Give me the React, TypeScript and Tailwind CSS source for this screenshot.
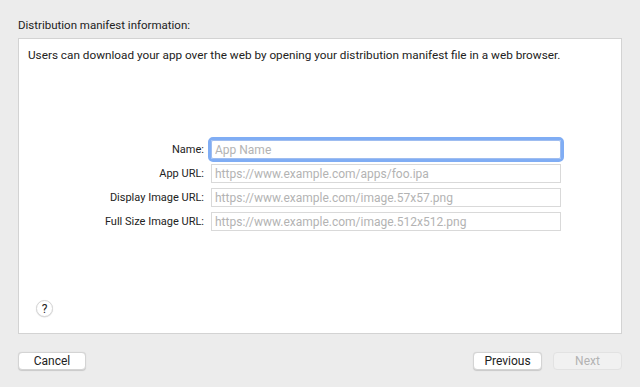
const fields = [
    { label: "Name:", placeholder: "App Name", focused: true },
    { label: "App URL:", placeholder: "https://www.example.com/apps/foo.ipa" },
    { label: "Display Image URL:", placeholder: "https://www.example.com/image.57x57.png" },
    { label: "Full Size Image URL:", placeholder: "https://www.example.com/image.512x512.png" },
];

export default function App() {
    return (
        <div className="w-[640px] h-[387px] bg-[#ececec] text-[#222222] font-['Roboto','Liberation_Sans',sans-serif] flex flex-col px-[18px] pt-[18px]">
            <h1 className="text-[11.5px] leading-[14px] h-[20px]">Distribution manifest information:</h1>
            <div className="h-[296px] bg-white border border-[#d3d3d3] flex flex-col px-[9px] pt-[9px]">
                <p className="text-[11.75px] leading-[15px] whitespace-nowrap">
                    Users can download your app over the web by opening your distribution manifest file in a web browser.
                </p>
                <div className="mt-[77px] flex flex-col gap-[5px]">
                    {fields.map((f) => (
                        <div key={f.label} className="flex items-center h-[19px]">
                            <label className="w-[183px] text-right pr-[7px] text-[11px] leading-[14px] whitespace-nowrap">
                                {f.label}
                            </label>
                            <input
                                readOnly
                                placeholder={f.placeholder}
                                className={
                                    f.focused
                                        ? "w-[350px] h-[19px] px-[3px] border border-[#9fbdf0] outline outline-[3px] outline-[#80adf4] rounded-[2px] placeholder:text-[#b3b3b3] text-[12px]"
                                        : "w-[350px] h-[19px] px-[3px] border border-[#d9d9d9] outline-none placeholder:text-[#b3b3b3] text-[12px]"
                                }
                            />
                        </div>
                    ))}
                </div>
                <div className="flex-1" />
                <button className="ml-[8px] mb-[16px] w-[17px] h-[17px] rounded-full border border-[#d6d6d6] bg-white shadow-[0_0.5px_1px_rgba(0,0,0,0.15)] flex items-center justify-center text-[12px] leading-none">
                    ?
                </button>
            </div>
            <div className="flex items-center mt-[18px] text-[12px]">
                <button className="w-[68px] h-[18px] bg-white rounded-[4px] border border-[#d4d4d4] shadow-[0_0.5px_1px_rgba(0,0,0,0.15)] leading-none">
                    Cancel
                </button>
                <div className="flex-1" />
                <button className="w-[69px] h-[18px] bg-white rounded-[4px] border border-[#d4d4d4] shadow-[0_0.5px_1px_rgba(0,0,0,0.15)] leading-none">
                    Previous
                </button>
                <button className="ml-[11px] w-[69px] h-[18px] bg-[#f1f1f1] rounded-[4px] border border-[#e2e2e2] text-[#b3b3b3] leading-none">
                    Next
                </button>
            </div>
        </div>
    );
}
